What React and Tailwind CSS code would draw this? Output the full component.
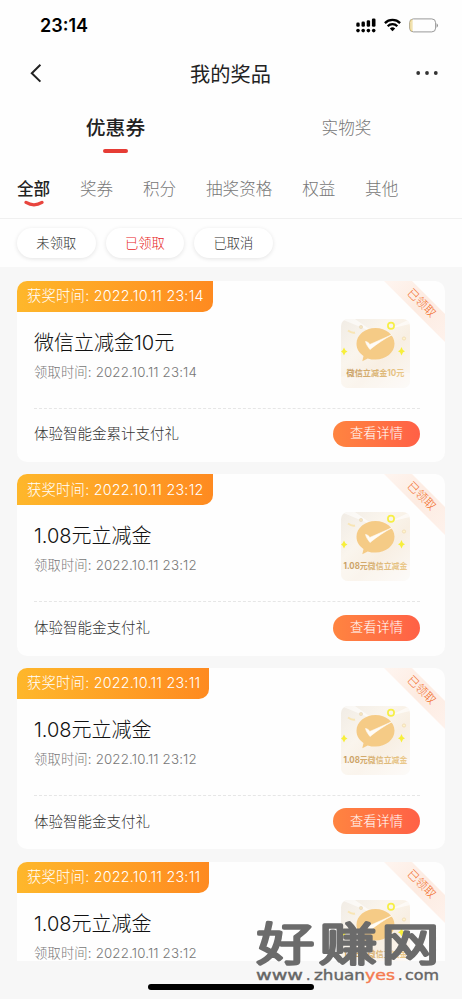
import React, { useState } from "react";
import clsx from "clsx";

const categories = ["全部", "奖券", "积分", "抽奖资格", "权益", "其他"];
const filters = ["未领取", "已领取", "已取消"];

const prizes = [
  {
    id: 1,
    wonAt: "2022.10.11 23:14",
    title: "微信立减金10元",
    takenAt: "2022.10.11 23:14",
    desc: "体验智能金累计支付礼",
    cover: "微信立减金10元",
    coverWidth: 58,
  },
  {
    id: 2,
    wonAt: "2022.10.11 23:12",
    title: "1.08元立减金",
    takenAt: "2022.10.11 23:12",
    desc: "体验智能金支付礼",
    cover: "1.08元微信立减金",
    coverWidth: 64,
  },
  {
    id: 3,
    wonAt: "2022.10.11 23:11",
    title: "1.08元立减金",
    takenAt: "2022.10.11 23:12",
    desc: "体验智能金支付礼",
    cover: "1.08元微信立减金",
    coverWidth: 64,
  },
  {
    id: 4,
    wonAt: "2022.10.11 23:11",
    title: "1.08元立减金",
    takenAt: "2022.10.11 23:12",
    desc: "体验智能金支付礼",
    cover: "1.08元微信立减金",
    coverWidth: 64,
  },
];

const StatusBar = () => (
  <div className="flex h-[50px] items-center justify-between pl-10 pr-6">
    <span className="text-[18px] font-semibold text-black">23:14</span>
    <div className="flex items-center">
      <svg width="20" height="15" viewBox="0 0 20 15" fill="#000">
        <rect x="0.3" y="4.6" width="3.4" height="4.2" rx="1.3" />
        <rect x="5.5" y="3.6" width="3.4" height="5.2" rx="1.3" />
        <rect x="10.7" y="2.2" width="3.4" height="6.6" rx="1.3" />
        <rect x="15.9" y="0.4" width="3.6" height="8.4" rx="1.3" />
        <circle cx="2" cy="12.6" r="1.8" />
        <circle cx="7.2" cy="12.6" r="1.8" />
        <circle cx="12.4" cy="12.6" r="1.8" />
        <circle cx="17.7" cy="12.6" r="1.8" />
      </svg>
      <svg className="ml-2" width="17" height="14" viewBox="0 0 17 14" fill="none" stroke="#000" strokeWidth="2.3">
        <path d="M0.9 5.1a10.8 10.8 0 0 1 15.2 0" />
        <path d="M3.7 8.2a6.8 6.8 0 0 1 9.6 0" />
        <path d="M8.5 13.2 5.8 10.5a3.8 3.8 0 0 1 5.4 0z" fill="#000" stroke="none" />
      </svg>
      <svg className="ml-2" width="29" height="15" viewBox="0 0 29 15" fill="none">
        <rect x="0.6" y="0.9" width="26" height="13" rx="3.8" stroke="#999" strokeWidth="1" />
        <path d="M2.9 1.6Q1.2 2.3 1.2 4.6v5.6q0 2.3 1.7 3z" stroke="#e9cf7d" strokeWidth="1" />
        <path d="M27.6 5.2q1.3.8 1.3 2.3t-1.3 2.3z" fill="#888" />
      </svg>
    </div>
  </div>
);

const NavBar = () => (
  <div className="flex h-[46px] items-center justify-between px-[30px]">
    <svg width="12" height="20" viewBox="0 0 12 20" fill="none" stroke="#222" strokeWidth="2">
      <path d="M10.4 1.8 1.8 10.2l8.6 8.4" />
    </svg>
    <h1 className="pl-1 pt-[3px] text-[20.2px] leading-[30px] text-[#222]">我的奖品</h1>
    <svg className="-mr-[7px]" width="24" height="6" viewBox="0 0 24 6" fill="#333">
      <circle cx="3.2" cy="3" r="1.9" />
      <circle cx="12" cy="3" r="1.9" />
      <circle cx="20.8" cy="3" r="1.9" />
    </svg>
  </div>
);

const Tabs = () => {
  const [active, setActive] = useState("优惠券");

  return (
    <div className="grid h-[64px] grid-cols-2">
      {["优惠券", "实物奖"].map((tab) => (
        <button
          key={tab}
          type="button"
          className="flex flex-col items-center pt-4"
          onClick={() => setActive(tab)}
        >
          <span
            className={clsx(
              "leading-8",
              active === tab ? "text-[19.8px] font-medium text-[#222]" : "text-[16.6px] font-light text-[#777]"
            )}
          >
            {tab}
          </span>
          {active === tab && <span className="mt-[5px] h-1 w-[25px] rounded-full bg-[#e63c35]" />}
        </button>
      ))}
    </div>
  );
};

const Categories = () => {
  const [active, setActive] = useState("全部");

  return (
    <div className="flex h-[59px] gap-[29.8px] border-b border-[#f0f0f0] px-[17px] pt-[17px]">
      {categories.map((name) => (
        <button
          key={name}
          type="button"
          className={clsx(
            "flex flex-col items-center whitespace-nowrap text-[16.6px] leading-6",
            active === name ? "font-medium text-[#222]" : "font-light text-[#777]"
          )}
          onClick={() => setActive(name)}
        >
          {name}
          {active === name && (
            <svg className="-mt-px" width="20" height="8" viewBox="0 0 20 8" fill="none">
              <path d="M2 2.4q8 4.8 16 0" stroke="#e8453e" strokeWidth="3.2" strokeLinecap="round" />
            </svg>
          )}
        </button>
      ))}
    </div>
  );
};

const Filters = () => {
  const [active, setActive] = useState("已领取");

  return (
    <div className="flex h-12 items-center gap-[10px] px-[17px]">
      {filters.map((name) => (
        <button
          key={name}
          type="button"
          className={clsx(
            "h-[30px] w-[78.6px] rounded-full bg-white pt-[2px] text-[13.3px] font-light shadow-[0_1px_4px_rgba(0,0,0,0.11)]",
            active === name ? "text-[#e8251e]" : "text-[#333]"
          )}
          onClick={() => setActive(name)}
        >
          {name}
        </button>
      ))}
    </div>
  );
};

// Small coupon artwork with the pay logo
const Cover = ({ id, text, width }) => (
  <svg className="shrink-0 rounded-[7px]" width="69" height="69" viewBox="0 0 69 69">
    <defs>
      <linearGradient id={`bg-${id}`} x1="0" y1="0" x2="1" y2="1">
        <stop offset="0" stopColor="#f1ece5" />
        <stop offset="0.35" stopColor="#faf5ed" />
        <stop offset="0.6" stopColor="#f8efe3" />
        <stop offset="1" stopColor="#fbf8f5" />
      </linearGradient>
      <linearGradient id={`txt-${id}`}>
        <stop offset="0" stopColor="#c69c60" />
        <stop offset="0.5" stopColor="#d9b272" />
        <stop offset="1" stopColor="#ecca8c" />
      </linearGradient>
    </defs>
    <rect width="69" height="69" fill={`url(#bg-${id})`} />
    <path d="M0 0 34 14 14 0zM69 0 48 10 69 5z" fill="#fff" opacity="0.6" />
    <path d="M0 58q34-12 69-4v15H0z" fill="#fff" opacity="0.35" />
    <path
      d="M34.5 9C24 9 15.5 16 15.5 24.8c0 5.2 2.8 9.3 7 12.2l-1.2 5.2 5.4-2.8c2.5.8 5 1.2 7.8 1.2C45 40.6 53.5 33.6 53.5 24.8S45 9 34.5 9z"
      fill="#f5cb86"
    />
    <path d="M24.5 22.500c1.800.2 3.300 1.300 4.300 3L51 15.700c-7 4-14.500 8.500-22 14.800-2-2.500-3.800-5.200-4.500-8z" fill="#fffcf6" stroke="#fffcf6" strokeWidth="0.6" />
    <circle cx="50" cy="6.8" r="3.1" fill="none" stroke="#f6ef45" strokeWidth="1.7" />
    <circle cx="20" cy="8" r="1.6" fill="#f6e5bd" stroke="#e6d9be" strokeWidth="0.7" />
    <circle cx="63" cy="19.5" r="1.6" fill="#fff4cc" stroke="#f0d9ae" strokeWidth="0.8" />
    <path d="M7 11.5q4 3 7 2" stroke="#f8e5b4" strokeWidth="2" fill="none" />
    <path
      d="M3 28.5l1.4 2.7 2.1 1.3-2.1 1.3L3 36.500l-1.400-2.700L0 32.500l1.600-1.300zM60.500 28l1.400 2.900 2.100 1.300-2.100 1.300-1.400 2.900-1.400-2.900-2.100-1.300 2.100-1.300z"
      fill="#f7ef3a"
    />
    <text
      x="34.5"
      y="57.2"
      textAnchor="middle"
      textLength={width}
      lengthAdjust="spacingAndGlyphs"
      fontSize="8.5"
      fontWeight="700"
      fill={`url(#txt-${id})`}
    >
      {text}
    </text>
  </svg>
);

const Ribbon = ({ id }) => (
  <svg className="absolute right-0 top-0" width="62" height="62" viewBox="0 0 62 62">
    <defs>
      <linearGradient id={`rb-${id}`} x1="0" y1="0" x2="1" y2="1">
        <stop offset="0" stopColor="#fef5f0" />
        <stop offset="0.5" stopColor="#fdebe1" />
        <stop offset="1" stopColor="#fef2ec" />
      </linearGradient>
    </defs>
    <path d="M1 0h28l33 33v28z" fill={`url(#rb-${id})`} />
    <text
      transform="translate(39 21.5) rotate(45)"
      textAnchor="middle"
      y="4.5"
      fontSize="11.5"
      fontWeight="300"
      fill="#f26a25"
    >
      已领取
    </text>
  </svg>
);

const PrizeCard = ({ prize }) => (
  <div className="relative h-[181.4px] shrink-0 overflow-hidden rounded-[10px] bg-[#fefefe]">
    <div className="inline-flex h-[31px] items-center rounded-br-[10px] bg-linear-to-r from-[#feb72b] to-[#fe8a20] pl-[10px] pr-[9px] text-[14.3px] font-light tracking-[0.24px] text-white">
      <span className="-mt-px whitespace-pre">获奖时间: {prize.wonAt}</span>
    </div>
    <Ribbon id={prize.id} />
    <div className="ml-[17px] mr-[25px] flex h-[97px] items-start justify-between border-b border-dashed border-[#e6e6e6] pr-[10px]">
      <div className="pt-4">
        <h2 className="text-[20px] font-light leading-[30px] text-[#111]">{prize.title}</h2>
        <p className="mt-1 text-[13.3px] font-light leading-5 tracking-[0.16px] text-[#777]">
          领取时间: {prize.takenAt}
        </p>
      </div>
      <div className="pt-[7px]">
        <Cover id={prize.id} text={prize.cover} width={prize.coverWidth} />
      </div>
    </div>
    <div className="flex h-[51px] items-center justify-between pl-[17px] pr-[25px]">
      <span className="text-[14.5px] font-light text-[#333]">{prize.desc}</span>
      <button
        type="button"
        className="h-[26px] w-[87px] rounded-full bg-linear-to-r from-[#ff8440] to-[#ff6046] text-[13.3px] font-light text-white"
      >
        查看详情
      </button>
    </div>
  </div>
);

const Watermark = () => (
  <svg className="absolute left-[252px] top-[914px]" width="192" height="72" viewBox="0 0 192 72">
    <text
      transform="translate(4.5 47) scale(1.16 0.91)"
      fontSize="50"
      fontWeight="300"
      letterSpacing="3.8"
      fill="#6b6b6b"
      stroke="#6b6b6b"
      strokeWidth="3.6"
      strokeLinejoin="round"
    >
      好赚网
    </text>
    <g fontFamily="DejaVu Sans" fontSize="14" fill="#666" stroke="#666" strokeWidth="0.4">
      <text x="4" y="66" textLength="47" lengthAdjust="spacingAndGlyphs">www</text>
      <text x="54" y="66">.</text>
      <text x="62" y="66" textLength="51" lengthAdjust="spacingAndGlyphs">zhuan</text>
      <text x="113" y="66" textLength="30" lengthAdjust="spacingAndGlyphs" fill="#f47b50" stroke="#f47b50">yes</text>
      <text x="146" y="66">.</text>
      <text x="153" y="66" textLength="34" lengthAdjust="spacingAndGlyphs">com</text>
    </g>
  </svg>
);

const App = () => (
  <div className="relative flex h-[999px] w-full flex-col overflow-hidden bg-[#f7f7f7] font-[Inter,'Noto_Sans_CJK_SC',sans-serif]">
    <header className="shrink-0 bg-[#fefefe]">
      <StatusBar />
      <NavBar />
      <Tabs />
      <Categories />
      <Filters />
    </header>
    <main className="flex h-[694px] shrink-0 flex-col gap-[12.3px] overflow-hidden px-[17px] pt-[13.6px]">
      {prizes.map((prize) => (
        <PrizeCard key={prize.id} prize={prize} />
      ))}
    </main>
    <div className="mx-auto mt-[23px] h-[6px] w-[166px] shrink-0 rounded-full bg-black" />
    <Watermark />
  </div>
);

export default App;
